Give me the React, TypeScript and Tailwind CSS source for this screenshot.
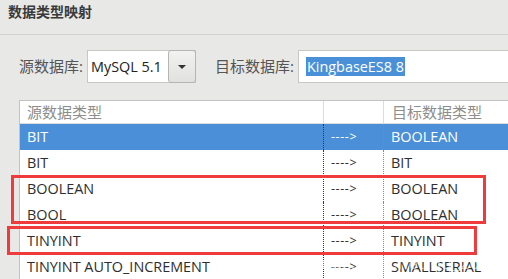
import React from 'react'

const rows = [
  { src: 'BIT', dst: 'BOOLEAN', selected: true },
  { src: 'BIT', dst: 'BIT' },
  { src: 'BOOLEAN', dst: 'BOOLEAN' },
  { src: 'BOOL', dst: 'BOOLEAN' },
  { src: 'TINYINT', dst: 'TINYINT' },
  { src: 'TINYINT AUTO_INCREMENT', dst: 'SMALLSERIAL' },
]

const font = { fontFamily: '"Open Sans", "Noto Sans CJK SC", sans-serif' }

export default function App() {
  return (
    <div
      className="relative w-[508px] h-[279px] overflow-hidden bg-[#e8e8e7] text-[#2e3436] text-[14.4px]"
      style={font}
    >
      {/* Title */}
      <div className="h-[35px] pl-[8px] pt-[1px] font-bold text-[14px] text-[#3a3a3a] border-b border-[#d3d3d1]">
        数据类型映射
      </div>

      {/* Database selectors */}
      <div className="flex items-center h-[33px] mt-[15px] pl-[19px]">
        <span className="w-[68px] shrink-0 text-[#555] text-[15px]">源数据库:</span>
        <div className="flex h-[33px] border border-[#c7c7c5] bg-white">
          <div className="w-[80px] pl-[3px] flex items-center text-[#222]">MySQL 5.1</div>
          <div className="w-[28px] -my-px -mr-px border border-[#b5b5b3] rounded-[3px] bg-gradient-to-b from-[#f2f2f1] to-[#e1e1df] flex items-center justify-center">
            <svg width="8" height="4" viewBox="0 0 8 4">
              <path d="M0 0h8L4 4z" fill="#2e3436" />
            </svg>
          </div>
        </div>
        <span className="ml-[19px] w-[83px] shrink-0 text-[#555] text-[15px]">目标数据库:</span>
        <div className="flex-1 h-[33px] border border-[#c7c7c5] border-r-0 bg-white flex items-center pl-[7px]">
          <span className="bg-[#4a90d9] text-white leading-[19px] px-[1px]">KingbaseES8 8</span>
        </div>
      </div>

      {/* Mapping table */}
      <div className="ml-[19px] mt-[17px] border-l border-t border-[#c3c3c1] bg-white">
        <div className="flex h-[23px] border-b border-[#dcdcda] text-[#8d8d8b] text-[15px]">
          <div className="w-[303px] pl-[7px] flex items-center">源数据类型</div>
          <div className="w-[60px] border-l border-[#dcdcda]" />
          <div className="flex-1 pl-[8px] flex items-center border-l border-[#dcdcda]">目标数据类型</div>
        </div>
        {rows.map((r, i) => (
          <div
            key={i}
            className={`flex h-[26px] ${r.selected ? 'bg-[#4a8fd7] text-white' : 'text-[#2e2e2e]'}`}
          >
            <div className="w-[303px] pl-[7px] flex items-center">{r.src}</div>
            <div className="w-[60px] pl-[7px] flex items-center border-l border-dotted border-[#333] text-[12.5px] tracking-[0.6px]">
              ----&gt;
            </div>
            <div className="flex-1 pl-[7px] flex items-center border-l border-dotted border-[#888]">{r.dst}</div>
          </div>
        ))}
      </div>

      {/* Annotation boxes */}
      <div className="absolute left-[11px] top-[175px] w-[475px] h-[49px] border-[3px] border-[#ee3b3b]" />
      <div className="absolute left-[7px] top-[226px] w-[470px] h-[29px] border-[3px] border-[#ee3b3b]" />

      {/* Watermark */}
      <div className="absolute left-[256px] top-[250px] text-[17px] text-white/60 tracking-[0.2px]">
        https://blog.csdn.net/qq_26310730
      </div>
    </div>
  )
}
